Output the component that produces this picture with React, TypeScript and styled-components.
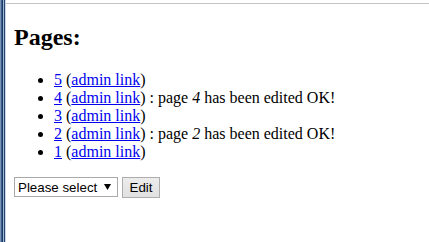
import React from 'react';
import styled, { createGlobalStyle } from 'styled-components';

const GlobalStyle = createGlobalStyle`
  html, body {
    margin: 0;
    padding: 0;
    background: #fff;
  }
`;

const Frame = styled.div`
  display: flex;
  min-height: 242px;
`;

const WindowEdge = styled.div`
  width: 6px;
  flex-shrink: 0;
  background: linear-gradient(
    to right,
    #7a95b8 0px,
    #7a95b8 1px,
    #3d5f8c 1px,
    #3d5f8c 2px,
    #1f3a60 2px,
    #1f3a60 3px,
    #9fb7d6 3px,
    #9fb7d6 4px,
    #2a4670 4px,
    #2a4670 5px,
    #c9d5e4 5px
  );
`;

const Viewport = styled.div`
  flex: 1;
  padding-top: 3px;
`;

const Page = styled.div`
  border-top: 1px solid #c4c4c4;
  padding: 0 8px 8px;
  font-family: 'Liberation Serif', 'Times New Roman', serif;
  font-size: 16px;
  color: #000;
  display: flow-root;
`;

const Title = styled.h2`
  font-size: 24px;
  font-weight: bold;
  margin: 19.92px 0;
`;

const PageList = styled.ul`
  margin: 16px 0;
  padding-left: 40px;
  list-style: disc;
`;

const PageLink = styled.a`
  color: #0000ee;
  text-decoration: underline;
`;

const EditForm = styled.form`
  display: flex;
  align-items: center;
  gap: 4px;
  margin: 0;
`;

const SelectBox = styled.label`
  display: inline-flex;
  align-items: center;
  box-sizing: border-box;
  width: 104px;
  height: 20px;
  border: 1px solid #a9a9a9;
  background: #fff;
`;

const PageSelect = styled.select`
  appearance: none;
  border: 0;
  outline: none;
  background: transparent;
  font-family: 'Liberation Sans', Arial, sans-serif;
  font-size: 13.33px;
  color: #000;
  padding: 0 0 0 3px;
  flex: 1;
  min-width: 0;
`;

const Arrow = styled.svg`
  width: 7px;
  height: 6px;
  margin-right: 6px;
`;

const EditButton = styled.button`
  box-sizing: border-box;
  height: 21px;
  padding: 0 6px;
  width: 38px;
  font-family: 'Liberation Sans', Arial, sans-serif;
  font-size: 13.33px;
  color: #000;
  background: linear-gradient(#ececec, #e1e1e1);
  border: 1px solid #adadad;
  border-radius: 0;
`;

const pages = [
  { id: 5, edited: false },
  { id: 4, edited: true },
  { id: 3, edited: false },
  { id: 2, edited: true },
  { id: 1, edited: false },
];

const App = () => {
  return (
    <>
      <GlobalStyle />
      <Frame>
        <WindowEdge />
        <Viewport>
          <Page>
            <Title>Pages:</Title>
            <PageList>
              {pages.map((p) => (
                <li key={p.id}>
                  <PageLink href='#'>{p.id}</PageLink> (
                  <PageLink href='#'>admin link</PageLink>)
                  {p.edited && (
                    <>
                      {' '}: page <em>{p.id}</em> has been edited OK!
                    </>
                  )}
                </li>
              ))}
            </PageList>
            <EditForm onSubmit={(e) => e.preventDefault()}>
              <SelectBox>
                <PageSelect defaultValue=''>
                  <option value=''>Please select</option>
                  {pages.map((p) => (
                    <option key={p.id} value={p.id}>
                      {p.id}
                    </option>
                  ))}
                </PageSelect>
                <Arrow viewBox='0 0 7 6'>
                  <polygon points='0,0 7,0 3.5,6' fill='#000' />
                </Arrow>
              </SelectBox>
              <EditButton type='submit'>Edit</EditButton>
            </EditForm>
          </Page>
        </Viewport>
      </Frame>
    </>
  );
};

export default App;
